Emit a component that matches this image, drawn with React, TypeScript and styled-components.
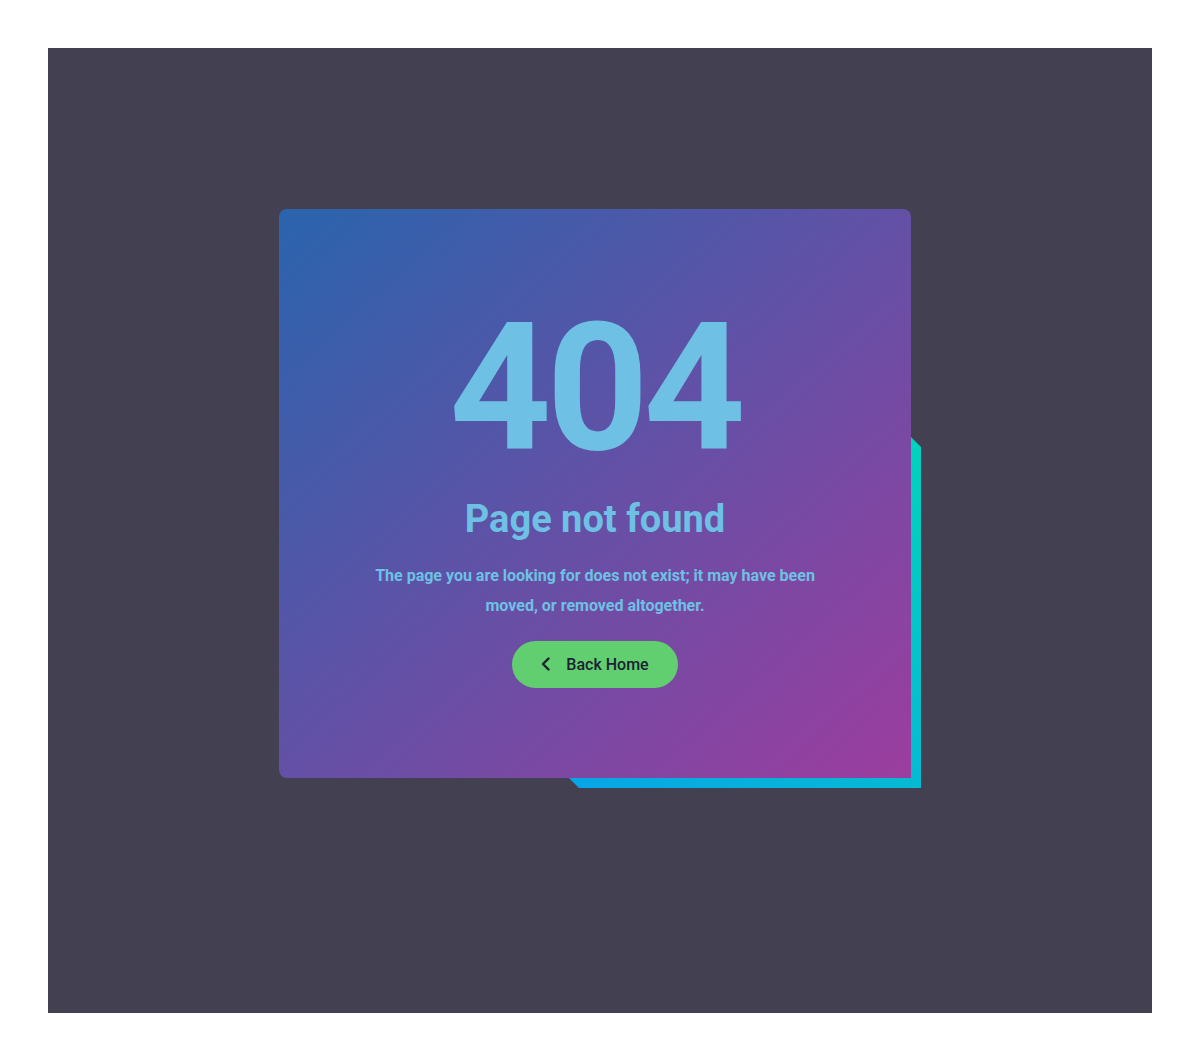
import React from 'react';
import styled, { createGlobalStyle } from 'styled-components';

const GlobalStyle = createGlobalStyle`
	* {
		box-sizing: border-box;
	}
	body {
		margin: 0;
		background: #ffffff;
		font-family: Roboto, 'Liberation Sans', sans-serif;
	}
`;

const Page = styled.div`
	padding: 48px;
`;

const Stage = styled.main`
	height: 965px;
	background: #434052;
	padding: 161px 241px 0 231px;
	display: flex;
	justify-content: center;
	align-items: flex-start;
`;

const Card = styled.section`
	position: relative;
	width: 632px;
	height: 569px;
	padding-top: 90px;
	display: flex;
	flex-direction: column;
	align-items: center;
	text-align: center;
	border-radius: 8px 8px 0 8px;
	background: linear-gradient(to bottom right, #2a64ad, #9c3d9f);
	z-index: 0;

	// the little 3d edge peeking out at the bottom right
	&::before {
		content: '';
		position: absolute;
		top: 0;
		left: 0;
		width: 642px;
		height: 579px;
		background: linear-gradient(to bottom left, #00e2ae, #0a93f6);
		clip-path: polygon(632px 228px, 642px 238px, 642px 579px, 300px 579px, 290px 569px, 632px 569px);
		z-index: -1;
	}
`;

const Code = styled.h1`
	margin: 0;
	font-size: 178px;
	line-height: 1;
	font-weight: 700;
	letter-spacing: -5px;
	color: #6ec1e4;
`;

const Title = styled.h2`
	margin: 20px 0 0;
	font-size: 38px;
	line-height: 1.2;
	font-weight: 700;
	color: #6ec1e4;
`;

const Message = styled.p`
	margin: 18px 0 0;
	max-width: 460px;
	font-size: 16px;
	line-height: 30px;
	font-weight: 700;
	color: #6ec1e4;
`;

const BackButton = styled.a`
	margin-top: 20px;
	height: 47px;
	padding: 0 29px 0 28px;
	display: inline-flex;
	align-items: center;
	gap: 14px;
	border-radius: 24px;
	background: #61ce70;
	color: #1c2233;
	font-size: 16px;
	font-weight: 500;
	text-decoration: none;
	cursor: pointer;
`;

const Chevron = () => (
	<svg width='12' height='14' viewBox='0 0 12 14' fill='none'>
		<path d='M8.5 1.5 L3 7 L8.5 12.5' stroke='#1c2233' strokeWidth='2.4' strokeLinecap='round' strokeLinejoin='round' />
	</svg>
);

const App = () => {
	return (
		<Page>
			<GlobalStyle />
			<Stage>
				<Card>
					<Code>404</Code>
					<Title>Page not found</Title>
					<Message>
						The page you are looking for does not exist; it may have been moved, or removed altogether.
					</Message>
					<BackButton href='#'>
						<Chevron />
						Back Home
					</BackButton>
				</Card>
			</Stage>
		</Page>
	);
};

export default App;
